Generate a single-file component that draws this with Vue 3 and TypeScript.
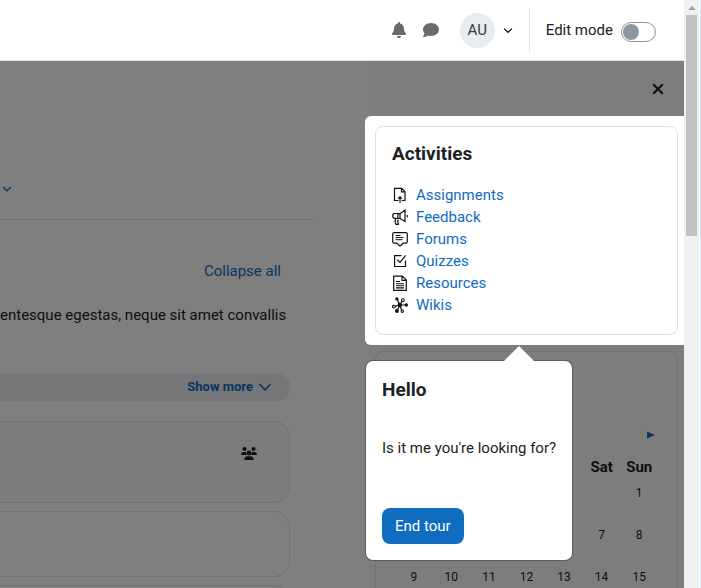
<script setup lang="ts">
import { ref } from 'vue'

interface Activity {
  label: string
  icon: string
}

const editMode = ref(false)
const tourOpen = ref(true)

const activities: Activity[] = [
  { label: 'Assignments', icon: 'assign' },
  { label: 'Feedback', icon: 'feedback' },
  { label: 'Forums', icon: 'forum' },
  { label: 'Quizzes', icon: 'quiz' },
  { label: 'Resources', icon: 'resource' },
  { label: 'Wikis', icon: 'wiki' },
]

const dayNames = ['', '', '', '', '', 'Sat', 'Sun']
const weeks = [
  ['', '', '', '', '', '', '1'],
  ['', '', '', '', '', '7', '8'],
  ['9', '10', '11', '12', '13', '14', '15'],
]
</script>

<template>
  <div class="window">
    <div class="page">
      <header class="navbar">
        <button class="icon-button" type="button" aria-label="Notifications">
          <svg class="bell" viewBox="0 0 448 512" fill="currentColor">
            <path d="M224 0c-17.7 0-32 14.3-32 32V51.2C119 66 64 130.6 64 208v18.8c0 47-17.3 92.4-48.5 127.6l-7.4 8.3c-8.4 9.4-10.4 22.9-5.3 34.4S19.4 416 32 416H416c12.6 0 24-7.4 29.2-18.9s3.1-25-5.3-34.4l-7.4-8.3C401.3 319.2 384 273.9 384 226.8V208c0-77.4-55-142-128-156.8V32c0-17.7-14.3-32-32-32zm45.3 493.3c12-12 18.7-28.3 18.7-45.3H224 160c0 17 6.7 33.3 18.7 45.3s28.3 18.7 45.3 18.7s33.3-6.7 45.3-18.7z" />
          </svg>
        </button>
        <button class="icon-button" type="button" aria-label="Messages">
          <svg class="comment" viewBox="0 0 512 512" fill="currentColor">
            <path d="M512 240c0 114.9-114.6 208-256 208c-37.1 0-72.3-6.4-104.1-17.9c-11.9 8.7-31.3 20.6-54.3 30.6C73.6 471.1 44.7 480 16 480c-6.5 0-12.3-3.9-14.8-9.9c-2.5-6-1.1-12.8 3.4-17.4l.3-.3c.3-.3 .7-.7 1.3-1.4c1.1-1.2 2.8-3.1 4.9-5.7c4.1-5 9.6-12.4 15.2-21.6c10-16.6 19.5-38.4 21.4-62.9C17.7 326.8 0 285.1 0 240C0 125.1 114.6 32 256 32s256 93.1 256 208z" />
          </svg>
        </button>
        <button class="user-menu" type="button" aria-label="User menu">
          <span class="avatar">AU</span>
          <svg class="chevron" viewBox="0 0 10 10" fill="none" stroke="currentColor" stroke-width="1.3" stroke-linecap="round">
            <path d="M1.500 4 5 7.300l3.500-3.300" />
          </svg>
        </button>
        <div class="edit-mode">
          <label for="edit-mode">Edit mode</label>
          <input id="edit-mode" v-model="editMode" class="switch" type="checkbox" role="switch" />
        </div>
      </header>

      <div class="body">
        <main class="content">
          <nav class="tabs">
            <button class="more-tab" type="button" aria-label="More">
              <svg class="chevron" viewBox="0 0 10 10" fill="none" stroke="currentColor" stroke-width="1.3" stroke-linecap="round">
                <path d="M1.500 3.500 5 6.800l3.500-3.300" />
              </svg>
            </button>
          </nav>
          <section class="course">
            <a class="collapse" href="#">Collapse all</a>
            <p class="summary">entesque egestas, neque sit amet convallis</p>
            <div class="show-bar">
              <button class="show-more" type="button">
                Show more
                <svg class="show-chevron" viewBox="0 0 12 12" fill="none" stroke="currentColor" stroke-width="1.7" stroke-linecap="round" stroke-linejoin="round">
                  <path d="M1 3.500 6 9l5-5.500" />
                </svg>
              </button>
            </div>
            <div class="activity-cards">
              <article class="activity-card tinted">
                <svg class="groups" viewBox="0 0 16 14" fill="currentColor">
                  <circle cx="3.500" cy="2" r="2" />
                  <circle cx="12.500" cy="2" r="2" />
                  <path d="M0 7.500C0 6 1.200 5 2.600 5h1.600c.4 0 .8.100 1.100.2-.2 1.100.1 2.100.8 2.800H.5C.2 8 0 7.800 0 7.500zM16 7.500C16 6 14.800 5 13.400 5h-1.600c-.4 0-.8.100-1.100.2.2 1.100-.1 2.100-.8 2.800h5.600c.3 0 .5-.2.5-.5z" />
                  <circle cx="8" cy="6" r="2.400" />
                  <path d="M3.200 12.400C3.200 10.500 4.700 9.200 6.500 9.200h3c1.800 0 3.300 1.300 3.300 3.200 0 .4-.3.600-.6.600H3.800c-.3 0-.6-.2-.6-.6z" />
                </svg>
              </article>
              <article class="activity-card short"></article>
              <article class="activity-card short"></article>
            </div>
          </section>
        </main>

        <aside class="drawer">
          <div class="drawer-header">
            <button class="close" type="button" aria-label="Close block drawer">
              <svg viewBox="0 0 12 12" fill="none" stroke="currentColor" stroke-width="2.200">
                <path d="M1.200 1.200l9.600 9.600M10.800 1.200 1.200 10.800" />
              </svg>
            </button>
          </div>

          <div class="spotlight">
            <section class="block activities">
              <h2>Activities</h2>
              <ul>
                <li v-for="item in activities" :key="item.label">
                  <svg class="mod-icon" viewBox="0 0 16 16" fill="none" stroke="#111" stroke-width="1.200">
                    <g v-if="item.icon === 'assign'">
                      <path d="M6.500 13.500H2.500V1.300h7.200l3.300 3.400v8.800H9.600M9.500 1.500v3.400h3.400M8 16v-5" />
                      <path d="M5.400 11.800 8 8.700l2.600 3.100z" fill="#111" stroke="none" />
                    </g>
                    <g v-else-if="item.icon === 'feedback'">
                      <path d="M5.800 4.500H1.800L.8 5.500v2.700l1 1h1.700M5.800 4.500v5.300M8 4.700l5-3.600v11.300L8 9.500zM5.800 4.700H8M5.800 9.500H8M5.800 9.500H3.500v2l-.6.500 1 3.300h2.500l-.8-3.600 1-.7" />
                      <path d="M15.300 6v2.200" />
                    </g>
                    <g v-else-if="item.icon === 'forum'">
                      <path d="M2.200 1.600h11.600q1.500 0 1.500 1.500v7.600q0 1.500-1.500 1.500h-2.500L8 14.900l-3.300-2.700H2.200q-1.500 0-1.500-1.500V3.100q0-1.500 1.500-1.500z" />
                      <path d="M3.500 4.500h5M3.500 6.600h8M3.500 8.700h7" stroke-width="1" />
                    </g>
                    <g v-else-if="item.icon === 'quiz'">
                      <path d="M9.500 2.600H2.600v10.900h10.900V7.500" />
                      <path d="M5.300 6.800 8 9.400l5.700-7" stroke-width="1.300" />
                    </g>
                    <g v-else-if="item.icon === 'resource'">
                      <path d="M1.700 1.100h8.600l4 4v10.200H1.700zM10 1.300v4h4.100" />
                      <path d="M4 6.500h4M4 8.700h8M4 10.800h8M4 12.900h8" stroke-width="1.100" />
                    </g>
                    <g v-else>
                      <path d="M7.800 8 5 2M7.800 8l2.700-4.500M7.800 8h6M7.800 8 1.700 9.700M7.800 8 5 14M7.800 8l2.200 6" />
                      <g fill="#111" stroke="none">
                        <circle cx="7.800" cy="8" r="2.200" />
                        <circle cx="4.900" cy="1.900" r="1.700" />
                        <circle cx="14.300" cy="8" r="1.700" />
                        <circle cx="4.900" cy="14" r="2" />
                      </g>
                      <g fill="#fff" stroke-width="1.100">
                        <circle cx="10.900" cy="3.200" r="1.400" />
                        <circle cx="1.900" cy="9.600" r="1.400" />
                        <circle cx="10.300" cy="14.200" r="1.200" />
                      </g>
                    </g>
                  </svg>
                  <a href="#">{{ item.label }}</a>
                </li>
              </ul>
            </section>

            <div v-if="tourOpen" class="tour" role="dialog" aria-labelledby="tour-title">
              <h2 id="tour-title">Hello</h2>
              <p>Is it me you're looking for?</p>
              <button class="end-tour" type="button" @click="tourOpen = false">End tour</button>
            </div>
          </div>

          <section class="block calendar">
            <a class="next-month" href="#" aria-label="Next month">
              <svg viewBox="0 0 8 8" fill="currentColor"><path d="M0 0.500 8 4 0 7.500z" /></svg>
            </a>
            <table>
              <thead>
                <tr>
                  <th v-for="(day, i) in dayNames" :key="i" scope="col">{{ day }}</th>
                </tr>
              </thead>
              <tbody>
                <tr v-for="(week, w) in weeks" :key="w">
                  <td v-for="(day, d) in week" :key="d">{{ day }}</td>
                </tr>
              </tbody>
            </table>
          </section>
        </aside>

        <div v-if="tourOpen" class="backdrop"></div>
      </div>
    </div>

    <div class="scrollbar">
      <svg class="scroll-up" viewBox="0 0 8 4" fill="#a3a3a3"><path d="M0 4 4 0l4 4z" /></svg>
      <div class="thumb"></div>
    </div>
    <div class="window-edge"></div>
  </div>
</template>

<style>
body {
  margin: 0;
  background: #fff;
}
</style>

<style scoped>
.window,
.window * {
  box-sizing: border-box;
}
.window {
  display: flex;
  height: 100vh;
  overflow: hidden;
  font-family: Roboto, 'Liberation Sans', sans-serif;
  font-size: 15px;
  line-height: 22px;
  color: #1d2125;
}
button {
  padding: 0;
  border: 0;
  background: none;
  color: inherit;
  font: inherit;
  cursor: pointer;
}
svg {
  display: block;
}
a {
  color: #0f6cbf;
  text-decoration: none;
}
h2 {
  margin: 0;
  font-size: 19px;
  font-weight: 700;
  line-height: 22px;
}
.page {
  display: flex;
  flex: 1;
  flex-direction: column;
  min-width: 0;
  overflow: hidden;
}

.navbar {
  display: flex;
  flex: none;
  align-items: center;
  justify-content: flex-end;
  height: 61px;
  padding-right: 28px;
  border-bottom: 1px solid #dee2e6;
}
.icon-button {
  display: flex;
  justify-content: center;
  width: 32px;
  color: #6a6a6a;
}
.bell {
  width: 14px;
  height: 16px;
}
.comment {
  width: 16px;
  height: 16px;
}
.user-menu {
  display: flex;
  align-items: center;
  gap: 8px;
  margin: 0 16px 0 13px;
}
.avatar {
  display: flex;
  align-items: center;
  justify-content: center;
  width: 35px;
  height: 35px;
  border-radius: 50%;
  background: #e9ecef;
  color: #343a40;
}
.chevron {
  width: 10px;
  height: 10px;
}
.edit-mode {
  display: flex;
  align-items: center;
  gap: 8px;
  height: 44px;
  padding-left: 16px;
  border-left: 1px solid #dee2e6;
}
.switch {
  width: 35px;
  height: 20px;
  margin: 4px 0 0;
  padding: 1px;
  border: 1px solid #8f959e;
  border-radius: 10px;
  background: #fff;
  appearance: none;
}
.switch::before {
  display: block;
  width: 16px;
  height: 16px;
  border-radius: 50%;
  background: #8f959e;
  content: '';
}
.switch:checked::before {
  margin-left: auto;
  background: #0f6cbf;
}

.body {
  position: relative;
  display: flex;
  flex: 1;
  min-height: 0;
}
.backdrop {
  position: absolute;
  z-index: 1;
  inset: 0;
  background: rgba(0, 0, 0, 0.5);
}
.content {
  flex: 1;
  min-width: 0;
  padding-right: 56px;
}
.tabs {
  display: flex;
  align-items: flex-end;
  height: 159px;
  padding: 0 2px 25px;
  border-bottom: 1px solid #dee2e6;
  color: #0f6cbf;
}
.course {
  display: flex;
  flex-direction: column;
  padding: 40px 23px 0 0;
}
.collapse {
  align-self: flex-end;
  padding-right: 9px;
}
.summary {
  margin: 22px 0 47px;
  white-space: nowrap;
}
.show-bar {
  display: flex;
  justify-content: flex-end;
  height: 28px;
  padding-right: 19px;
  border-radius: 0 14px 14px 0;
  background: #e9ecef;
}
.show-more {
  display: flex;
  align-items: center;
  gap: 6px;
  color: #0f6cbf;
  font-size: 13px;
  font-weight: 700;
}
.show-chevron {
  width: 12px;
  height: 12px;
}
.activity-cards {
  display: flex;
  flex-direction: column;
  gap: 8px;
  padding-top: 20px;
}
.activity-card {
  display: flex;
  justify-content: flex-end;
  height: 82px;
  padding: 25px 32px 0 0;
  border: 1px solid #dee2e6;
  border-left: 0;
  border-radius: 0 16px 16px 0;
}
.activity-card.tinted {
  background: #f8f8f8;
}
.activity-card.short {
  height: 66px;
}
.groups {
  width: 16px;
  height: 14px;
}

.drawer {
  width: 315px;
  padding: 0 6px;
  background: #fafafa;
}
.drawer-header {
  display: flex;
  align-items: center;
  justify-content: flex-end;
  height: 65px;
  padding: 0 14px 9px 0;
}
.close svg {
  width: 12px;
  height: 12px;
}
.spotlight {
  position: relative;
  z-index: 2;
}
.spotlight::before {
  position: absolute;
  z-index: -1;
  inset: -10px;
  border-radius: 6px;
  background: #fff;
  content: '';
}
.block {
  border: 1px solid #dee2e6;
  border-radius: 8px;
}
.activities {
  padding: 16px 16px 18px;
}
.activities ul {
  margin: 19px 0 0;
  padding: 0;
  list-style: none;
}
.activities li {
  display: flex;
  align-items: center;
  gap: 8px;
}
.mod-icon {
  width: 16px;
  height: 16px;
}

.tour {
  position: absolute;
  top: calc(100% + 25px);
  left: -10px;
  padding: 18px 16px 16px;
  border: 1px solid rgba(0, 0, 0, 0.25);
  border-radius: 8px;
  background: #fff;
  background-clip: padding-box;
  white-space: nowrap;
}
.tour::before {
  position: absolute;
  top: -15px;
  left: 138px;
  width: 30px;
  height: 15px;
  background: #fff;
  clip-path: polygon(0 100%, 50% 0, 100% 100%);
  content: '';
}
.tour p {
  margin: 36px 0 49px;
}
.end-tour {
  height: 36px;
  padding: 0 13px;
  border-radius: 8px;
  background: #0f6cbf;
  color: #fff;
}

.calendar {
  margin-top: 16px;
  padding: 79px 19px 0;
}
.next-month {
  display: flex;
  justify-content: flex-end;
  padding-right: 3px;
}
.next-month svg {
  width: 8px;
  height: 8px;
}
table {
  width: 100%;
  margin-top: 16px;
  border-collapse: collapse;
  table-layout: fixed;
}
th {
  height: 24px;
  padding: 0;
  font-weight: 700;
}
td {
  height: 42px;
  padding: 4px 0 0;
  font-size: 12px;
  line-height: 20px;
  text-align: center;
  vertical-align: top;
}

.scrollbar {
  display: flex;
  flex-direction: column;
  align-items: center;
  width: 15px;
  padding: 6px 2px 0;
  background: #f1f1f1;
}
.scroll-up {
  width: 8px;
  height: 4px;
}
.thumb {
  width: 11px;
  height: 38%;
  margin-top: 5px;
  background: #c1c1c1;
}
.window-edge {
  width: 2px;
  border-right: 1px solid #dbe6f8;
}
</style>
